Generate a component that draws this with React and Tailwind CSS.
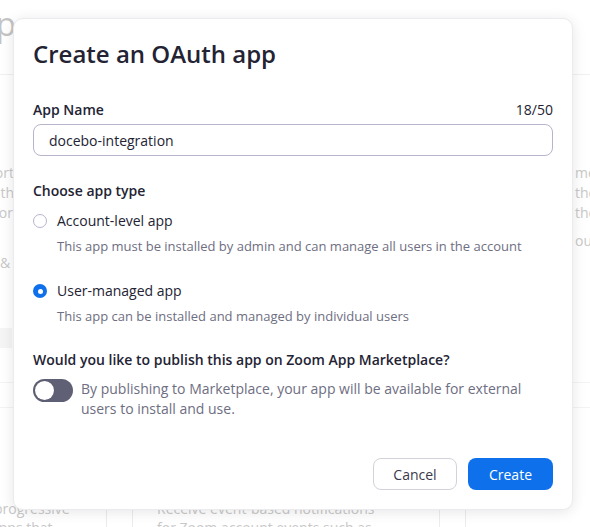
import React from "react";

function Radio({ checked }) {
  if (checked) {
    return (
      <span className="flex h-[14px] w-[14px] shrink-0 items-center justify-center rounded-full bg-[#0e71eb]">
        <span className="h-[5px] w-[5px] rounded-full bg-white" />
      </span>
    );
  }
  return <span className="h-[14px] w-[14px] shrink-0 rounded-full border border-[#b7b5cc] bg-white" />;
}

export default function App() {
  return (
    <div className="relative h-[527px] w-[590px] overflow-hidden bg-white font-['Open_Sans','Liberation_Sans',sans-serif]">
      {/* faded background page */}
      <div className="flex flex-col text-[#c8c8c8]">
        <div className="flex h-[75px] items-start border-b border-[#f0f0f0] pt-[4px]">
          <div className="flex w-[16px] justify-end">
            <span className="whitespace-nowrap text-[33px] leading-[40px] text-[#c4c4c4]">App</span>
          </div>
        </div>
        <div className="flex h-[253px] justify-between pt-[88px] text-[14px] leading-[20px]">
          <div className="flex w-[14px] flex-col items-end">
            <span className="whitespace-nowrap">support</span>
            <span className="whitespace-nowrap">with</span>
            <span className="whitespace-nowrap pr-[1px]">for</span>
            <span className="mt-[30px] self-start whitespace-nowrap">&amp; more</span>
          </div>
          <div className="flex w-[15px] flex-col overflow-hidden">
            <span className="whitespace-nowrap">meeting</span>
            <span className="whitespace-nowrap">the</span>
            <span className="whitespace-nowrap">their</span>
            <span className="mt-[8px] whitespace-nowrap">out</span>
          </div>
        </div>
        <div className="h-[20px] w-[12px] bg-[#f5f5f5]" />
        <div className="h-[35px] border-b border-[#f3f3f3]" />
        <div className="h-[25px] border-b border-[#f3f3f3]" />
        <div className="mt-[62px] flex h-[60px] gap-[25px] text-[14px] leading-[19px]">
          <div className="w-[107px] shrink-0 border-r border-[#ececec] pt-[29px]">
            <div className="-ml-[6px] whitespace-nowrap">progressive</div>
            <div className="-ml-[9px] whitespace-nowrap">apps that</div>
          </div>
          <div className="w-[308px] shrink-0 border-x border-[#ececec] pl-[24px] pt-[29px]">
            <div className="whitespace-nowrap">Receive event-based notifications</div>
            <div className="whitespace-nowrap">for Zoom account events such as</div>
          </div>
          <div className="flex-1 border-l border-[#ececec]" />
        </div>
      </div>

      {/* modal */}
      <div className="absolute left-[13px] top-[18px] w-[560px] rounded-[10px] border border-[#ebebef] bg-white px-[19px] pb-[19px] pt-[19px] text-[#232333] shadow-[0_2px_14px_rgba(0,0,0,0.10)]">
        <h2 className="text-[24px] font-semibold leading-[32px] text-[#232333]">Create an OAuth app</h2>

        <div className="mt-[30px] flex justify-between text-[14px] leading-[20px]">
          <span className="font-semibold">App Name</span>
          <span>18/50</span>
        </div>
        <div className="mt-[4px] flex h-[32px] items-center rounded-[8px] border border-[#b7b5cc] px-[15px] text-[14px] text-[#232333]">
          docebo-integration
        </div>

        <div className="mt-[25px] text-[14px] font-semibold leading-[20px]">Choose app type</div>

        <div className="mt-[10px] flex items-center gap-[10px] text-[14px] leading-[20px]">
          <Radio checked={false} />
          <span>Account-level app</span>
        </div>
        <div className="ml-[24px] mt-[5px] text-[13px] leading-[20px] text-[#6e6e82]">
          This app must be installed by admin and can manage all users in the account
        </div>

        <div className="mt-[25px] flex items-center gap-[10px] text-[14px] leading-[20px]">
          <Radio checked={true} />
          <span>User-managed app</span>
        </div>
        <div className="ml-[24px] mt-[5px] text-[13px] leading-[20px] text-[#6e6e82]">
          This app can be installed and managed by individual users
        </div>

        <div className="mt-[24px] text-[14px] font-semibold leading-[20px]">
          Would you like to publish this app on Zoom App Marketplace?
        </div>
        <div className="mt-[9px] flex items-start gap-[8px]">
          <span className="flex h-[23px] w-[40px] shrink-0 items-center rounded-full bg-[#5f5f75] pl-[2px]">
            <span className="h-[19px] w-[19px] rounded-full bg-white shadow-[0_0_1px_rgba(0,0,0,0.3)]" />
          </span>
          <p className="text-[14px] leading-[20px] text-[#6e6e82]">
            By publishing to Marketplace, your app will be available for external
            <br />
            users to install and use.
          </p>
        </div>

        <div className="mt-[39px] flex justify-end gap-[11px] text-[14px]">
          <button className="flex h-[32px] w-[84px] items-center justify-center rounded-[8px] border border-[#d2d2da] bg-white text-[#3a3a4c]">
            Cancel
          </button>
          <button className="flex h-[32px] w-[85px] items-center justify-center rounded-[8px] bg-[#0e71eb] text-white">
            Create
          </button>
        </div>
      </div>
    </div>
  );
}
